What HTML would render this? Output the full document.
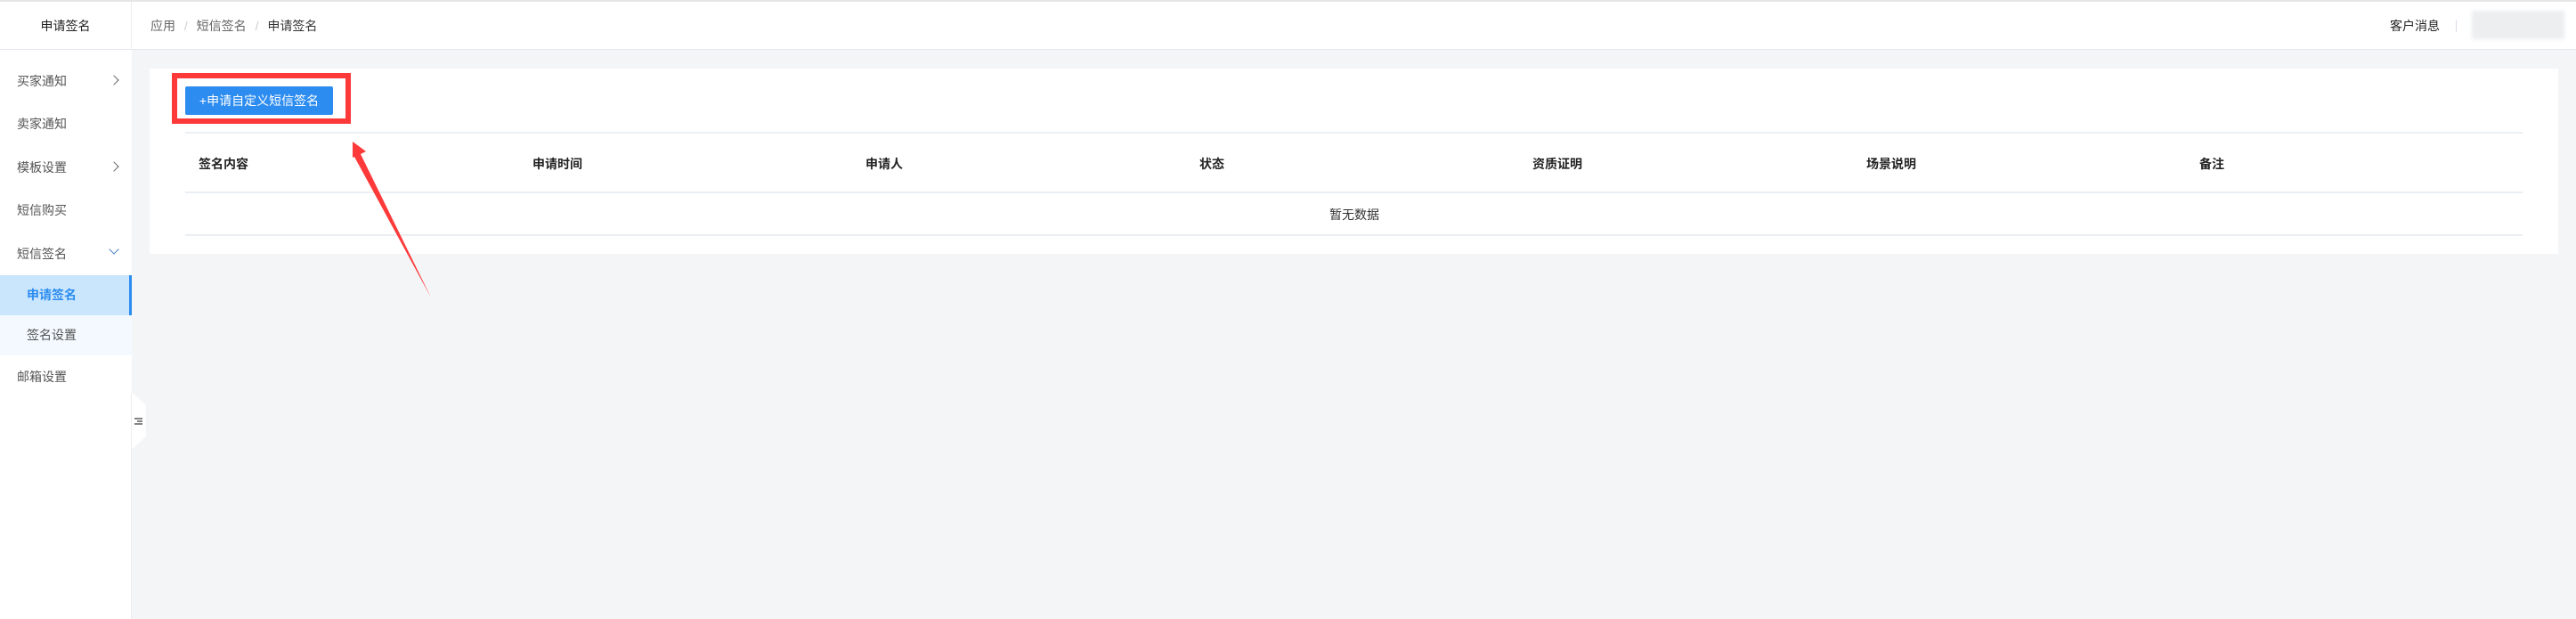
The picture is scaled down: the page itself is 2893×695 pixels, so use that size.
<!DOCTYPE html>
<html><head><meta charset="utf-8"><style>
*{margin:0;padding:0;box-sizing:border-box}
body{width:2893px;height:695px;overflow:hidden;background:#f4f5f7;font-family:"Liberation Sans","Noto Sans CJK SC",sans-serif;font-size:14px;color:#333;position:relative}
.abs{position:absolute}
.top{left:0;top:0;width:2893px;height:56px;background:#fff;border-top:2px solid #e6e6e6;border-bottom:1px solid #e4e7ed}
.side{left:0;top:56px;width:148px;height:639px;background:#fff}
.sidetitle{left:0;top:2px;width:148px;height:54px;border-right:1px solid #eee;text-align:center;line-height:54px;color:#222}
.mi{left:0;width:148px;height:46px;line-height:46px;padding-left:19px;color:#555}
.chev{position:absolute;left:124px;top:18px;width:8px;height:8px;border-right:1.5px solid #666;border-top:1.5px solid #666;transform:rotate(45deg)}
.chevd{position:absolute;left:124px;top:14px;width:8px;height:8px;border-right:1.5px solid #4a7fc0;border-bottom:1.5px solid #4a7fc0;transform:rotate(45deg)}
.card{left:168px;top:77px;width:2705px;height:208px;background:#fff}
.line{left:208px;width:2625px;height:2px;background:#ebeef2}
.th{top:174px;font-weight:bold;color:#222}
</style></head><body>
<div class="abs top"></div>
<div class="abs sidetitle">申请签名</div>
<div class="abs" style="left:169px;top:19px;color:#666">应用 <span style="color:#ccc;margin:0 6px">/</span> 短信签名 <span style="color:#ccc;margin:0 6px">/</span> <span style="color:#333">申请签名</span></div>
<div class="abs" style="left:2684px;top:19px;color:#222">客户消息</div>
<div class="abs" style="left:2758px;top:22px;width:1px;height:14px;background:#dde"></div>
<div class="abs" style="left:2776px;top:12px;width:104px;height:32px;background:#eceef0;filter:blur(2px)"></div>
<div class="abs side">
<div class="abs mi" style="top:12px">买家通知<i class="chev"></i></div>
<div class="abs mi" style="top:60px">卖家通知</div>
<div class="abs mi" style="top:109px">模板设置<i class="chev"></i></div>
<div class="abs mi" style="top:157px">短信购买</div>
<div class="abs mi" style="top:206px">短信签名<i class="chevd"></i></div>
<div class="abs mi" style="top:253px;height:45px;line-height:45px;background:#c9e6fd;border-right:3px solid #2d8cf0;color:#2d8cf0;padding-left:30px;font-weight:bold">申请签名</div>
<div class="abs mi" style="top:298px;height:45px;line-height:45px;background:#f3f9ff;padding-left:30px">签名设置</div>
<div class="abs mi" style="top:344px">邮箱设置</div>
</div>
<div class="abs" style="left:147px;top:442px;width:1px;height:253px;background:#eee"></div>
<svg class="abs" style="left:148px;top:440px" width="20" height="65"><path d="M0 2 L2 2 L16 15 L16 50 L2 63 L0 63Z" fill="#fff"/><path d="M11 16 L19 16 L19 50 L11 50" fill="none"/><g stroke="#666" stroke-width="1.6"><line x1="3" y1="30" x2="12" y2="30"/><line x1="6" y1="33" x2="12" y2="33"/><line x1="3" y1="36" x2="12" y2="36"/></g></svg>
<div class="abs card"></div>
<div class="abs" style="left:193px;top:82px;width:201px;height:57px;border:6px solid #fd3939"></div>
<div class="abs" style="left:208px;top:97px;width:166px;height:32px;background:#2d8cf0;border-radius:2px;color:#fff;text-align:center;line-height:32px">+申请自定义短信签名</div>
<div class="abs line" style="top:148px"></div>
<div class="abs line" style="top:215px"></div>
<div class="abs line" style="top:263px"></div>
<div class="abs th" style="left:223px">签名内容</div>
<div class="abs th" style="left:598px">申请时间</div>
<div class="abs th" style="left:972px">申请人</div>
<div class="abs th" style="left:1347px">状态</div>
<div class="abs th" style="left:1721px">资质证明</div>
<div class="abs th" style="left:2096px">场景说明</div>
<div class="abs th" style="left:2470px">备注</div>
<div class="abs" style="left:1493px;top:231px;color:#333">暂无数据</div>
<svg class="abs" style="left:0;top:0" width="600" height="400"><path d="M396 159 L411 170 L405 173 L484 334 L398 176 L396 177Z" fill="#fd3939"/></svg>
</body></html>
